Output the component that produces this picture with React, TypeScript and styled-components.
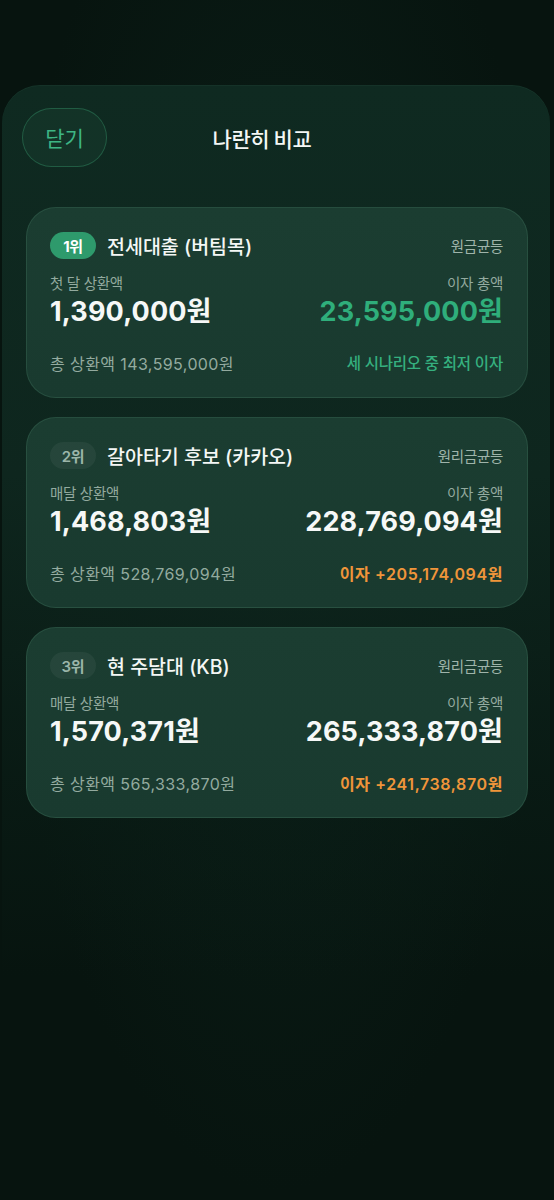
import React from "react";
import styled, { createGlobalStyle } from "styled-components";

const Global = createGlobalStyle`
  html, body { margin: 0; padding: 0; background: #07130f; }
  body {
    font-family: "Inter", "Noto Sans CJK KR", sans-serif;
    -webkit-font-smoothing: antialiased;
  }
  * { box-sizing: border-box; }
`;

const Screen = styled.div`
  min-height: 1200px;
  padding-top: 85px;
  background: radial-gradient(ellipse at 50% 40%, #0b1f18 0%, #07140f 70%);
`;

const Sheet = styled.div`
  margin: 0 4px 0 2px;
  min-height: 1115px;
  border-radius: 38px 38px 0 0;
  padding: 23px 22px 0 24px;
  background: linear-gradient(180deg, #0f2a21 0%, #0e261e 35%, rgba(10, 30, 23, 0.6) 62%, rgba(7, 20, 15, 0) 80%);
  box-shadow: inset 0 1px 0 rgba(140, 220, 180, 0.05);
`;

const Header = styled.div`
  position: relative;
  display: flex;
  align-items: center;
  height: 59px;
  margin-left: -4px;
`;

const CloseButton = styled.button`
  width: 85px;
  height: 59px;
  border-radius: 30px;
  border: 1.5px solid rgba(60, 170, 120, 0.35);
  background: rgba(30, 80, 60, 0.25);
  color: #3db585;
  font-family: "Noto Sans CJK KR", sans-serif;
  font-size: 21px;
  font-weight: 400;
  display: flex;
  align-items: center;
  justify-content: center;
  padding: 0 0 2px;
`;

const Title = styled.h1`
  position: absolute;
  left: 0;
  right: 26px;
  margin: 0;
  text-align: center;
  pointer-events: none;
  color: #f3f7f5;
  font-family: "Noto Sans CJK KR", sans-serif;
  font-size: 21px;
  font-weight: 500;
  letter-spacing: -0.4px;
`;

const CardList = styled.div`
  display: flex;
  flex-direction: column;
  gap: 19px;
  margin-top: 40px;
`;

const Card = styled.div`
  border-radius: 30px;
  background: linear-gradient(180deg, #1b3d31 0%, #193a2f 100%);
  border: 1px solid rgba(130, 210, 170, 0.13);
  padding: 23px 24px 22px 23px;
  display: flex;
  flex-direction: column;
`;

const TopRow = styled.div`
  display: flex;
  align-items: center;
  height: 28px;
`;

const Badge = styled.span<{ $first?: boolean }>`
  display: inline-flex;
  align-items: center;
  justify-content: center;
  width: 46px;
  height: 27px;
  border-radius: 14px;
  background: ${(p) => (p.$first ? "#2e9a6c" : "rgba(255,255,255,0.05)")};
  color: ${(p) => (p.$first ? "#ffffff" : "#9bb5a9")};
  font-size: 15px;
  font-weight: ${(p) => (p.$first ? 700 : 600)};
  letter-spacing: -0.3px;
`;

const CardTitle = styled.span`
  margin-left: 11px;
  color: #f4f7f5;
  font-size: 19.5px;
  font-weight: 500;
  letter-spacing: 0;
`;

const Method = styled.span`
  margin-left: auto;
  color: #9fb4aa;
  font-size: 14.5px;
  font-weight: 400;
  letter-spacing: -0.3px;
`;

const StatsRow = styled.div`
  display: flex;
  justify-content: space-between;
  margin-top: 15px;
`;

const Stat = styled.div<{ $right?: boolean }>`
  display: flex;
  flex-direction: column;
  align-items: ${(p) => (p.$right ? "flex-end" : "flex-start")};
`;

const Label = styled.span`
  color: #93aa9f;
  font-size: 14.5px;
  line-height: 20px;
  letter-spacing: -0.3px;
`;

const Amount = styled.span<{ $color?: string }>`
  margin-top: 1px;
  color: ${(p) => p.$color ?? "#f6f8f7"};
  font-size: 27px;
  line-height: 34px;
  font-weight: 700;
  letter-spacing: 0.15px;
`;

const Footer = styled.div`
  display: flex;
  justify-content: space-between;
  align-items: center;
  margin-top: 24px;
  line-height: 22px;
`;

const Total = styled.span`
  color: #93aa9f;
  font-size: 16px;
  letter-spacing: 0.4px;
`;

const Note = styled.span<{ $color: string; $bold?: boolean }>`
  color: ${(p) => p.$color};
  font-size: ${(p) => (p.$bold ? "16px" : "15.5px")};
  font-weight: ${(p) => (p.$bold ? 600 : 500)};
  letter-spacing: ${(p) => (p.$bold ? "0.6px" : "-0.2px")};
`;

type Item = {
  rank: number;
  name: string;
  method: string;
  payLabel: string;
  pay: string;
  interest: string;
  total: string;
  note: string;
  best?: boolean;
};

const items: Item[] = [
  {
    rank: 1,
    name: "전세대출 (버팀목)",
    method: "원금균등",
    payLabel: "첫 달 상환액",
    pay: "1,390,000원",
    interest: "23,595,000원",
    total: "총 상환액 143,595,000원",
    note: "세 시나리오 중 최저 이자",
    best: true,
  },
  {
    rank: 2,
    name: "갈아타기 후보 (카카오)",
    method: "원리금균등",
    payLabel: "매달 상환액",
    pay: "1,468,803원",
    interest: "228,769,094원",
    total: "총 상환액 528,769,094원",
    note: "이자 +205,174,094원",
  },
  {
    rank: 3,
    name: "현 주담대 (KB)",
    method: "원리금균등",
    payLabel: "매달 상환액",
    pay: "1,570,371원",
    interest: "265,333,870원",
    total: "총 상환액 565,333,870원",
    note: "이자 +241,738,870원",
  },
];

export default function App() {
  return (
    <>
      <Global />
      <Screen>
        <Sheet>
          <Header>
            <CloseButton>닫기</CloseButton>
            <Title>나란히 비교</Title>
          </Header>
          <CardList>
            {items.map((it) => (
              <Card key={it.rank}>
                <TopRow>
                  <Badge $first={it.best}>{it.rank}위</Badge>
                  <CardTitle>{it.name}</CardTitle>
                  <Method>{it.method}</Method>
                </TopRow>
                <StatsRow>
                  <Stat>
                    <Label>{it.payLabel}</Label>
                    <Amount>{it.pay}</Amount>
                  </Stat>
                  <Stat $right>
                    <Label>이자 총액</Label>
                    <Amount $color={it.best ? "#2fae7b" : undefined}>{it.interest}</Amount>
                  </Stat>
                </StatsRow>
                <Footer>
                  <Total>{it.total}</Total>
                  <Note $color={it.best ? "#35b07f" : "#f0953a"} $bold={!it.best}>
                    {it.note}
                  </Note>
                </Footer>
              </Card>
            ))}
          </CardList>
        </Sheet>
      </Screen>
    </>
  );
}
